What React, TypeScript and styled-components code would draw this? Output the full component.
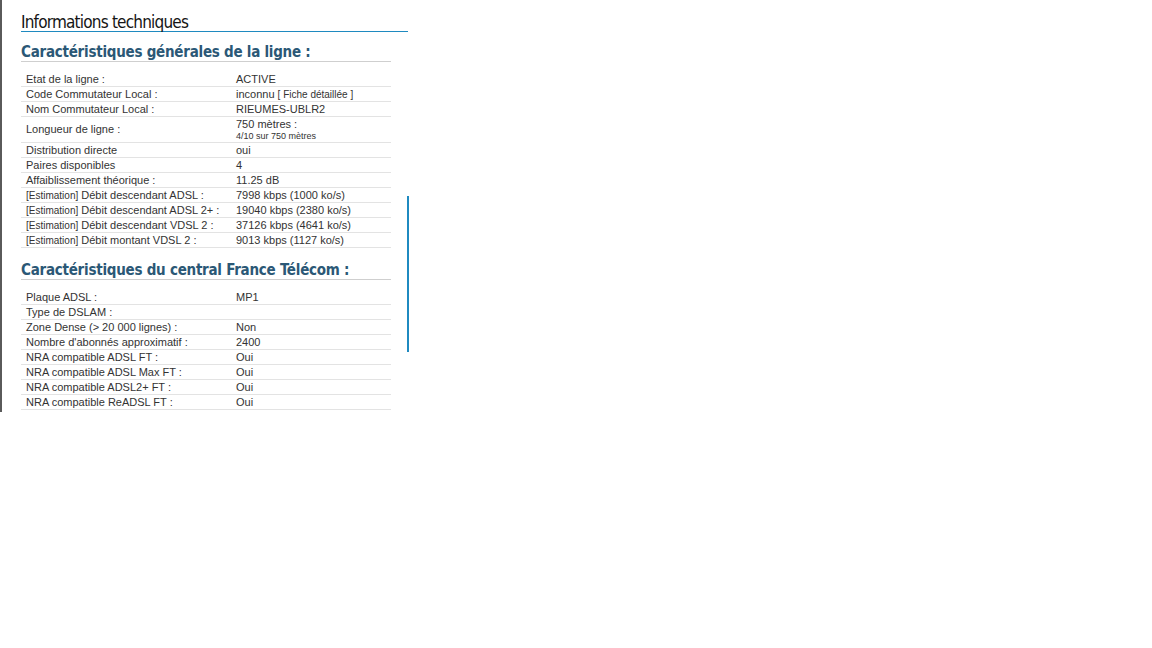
import React from "react";
import styled, { createGlobalStyle } from "styled-components";

const Global = createGlobalStyle`
  html, body { margin: 0; padding: 0; background: #fff; }
  body { font-family: "Liberation Sans", Arial, sans-serif; font-size: 11px; color: #333; }
`;

const Frame = styled.div`
  position: relative;
  width: 387px;
  border-left: 2px solid #5a5a5a;
  padding: 13px 0 2px 19px;
`;

const ScrollMark = styled.div`
  position: absolute;
  left: 405px;
  top: 196px;
  width: 2px;
  height: 156px;
  background: #1f8ac0;
`;

const Title = styled.h1`
  margin: 0;
  font-family: "DejaVu Sans Condensed", "DejaVu Sans", sans-serif;
  font-weight: normal;
  font-size: 17px;
  letter-spacing: -0.8px;
  line-height: 18px;
  color: #151515;
  border-bottom: 1px solid #1f8ac0;
  padding-bottom: 0;
`;

const SectionTitle = styled.h2<{ $first?: boolean }>`
  margin: ${(p) => (p.$first ? "11px" : "13px")} 0 0 0;
  width: 370px;
  font-family: "DejaVu Sans Condensed", "DejaVu Sans", sans-serif;
  font-weight: bold;
  font-size: 15px;
  letter-spacing: -0.25px;
  line-height: 18px;
  color: #2b5876;
  border-bottom: 1px solid #cfcfcf;
  padding-bottom: 0;
`;

const Table = styled.div`
  margin-top: 10px;
  width: 370px;
  display: flex;
  flex-direction: column;
`;

const Row = styled.div<{ $tall?: boolean }>`
  display: grid;
  grid-template-columns: 210px 1fr;
  align-items: center;
  min-height: ${(p) => (p.$tall ? "25px" : "14px")};
  border-bottom: 1px solid #e3e3e3;
`;

const Cell = styled.div`
  padding: 0 5px;
  font-size: 11px;
  line-height: 13px;
  color: #333;
  white-space: nowrap;
`;

const Small = styled.span`
  font-size: 10px;
`;

const Sub = styled.div`
  font-size: 9px;
  line-height: 10px;
`;

type R = { label: React.ReactNode; value: React.ReactNode; tall?: boolean };

const general: R[] = [
  { label: "Etat de la ligne :", value: "ACTIVE" },
  { label: "Code Commutateur Local :", value: <>inconnu <Small>[ Fiche détaillée ]</Small></> },
  { label: "Nom Commutateur Local :", value: "RIEUMES-UBLR2" },
  { label: "Longueur de ligne :", value: <><div>750 mètres :</div><Sub>4/10 sur 750 mètres</Sub></>, tall: true },
  { label: "Distribution directe", value: "oui" },
  { label: "Paires disponibles", value: "4" },
  { label: "Affaiblissement théorique :", value: "11.25 dB" },
  { label: <><Small>[Estimation]</Small> Débit descendant ADSL :</>, value: "7998 kbps (1000 ko/s)" },
  { label: <><Small>[Estimation]</Small> Débit descendant ADSL 2+ :</>, value: "19040 kbps (2380 ko/s)" },
  { label: <><Small>[Estimation]</Small> Débit descendant VDSL 2 :</>, value: "37126 kbps (4641 ko/s)" },
  { label: <><Small>[Estimation]</Small> Débit montant VDSL 2 :</>, value: "9013 kbps (1127 ko/s)" },
];

const central: R[] = [
  { label: "Plaque ADSL :", value: "MP1" },
  { label: "Type de DSLAM :", value: "" },
  { label: "Zone Dense (> 20 000 lignes) :", value: "Non" },
  { label: "Nombre d'abonnés approximatif :", value: "2400" },
  { label: "NRA compatible ADSL FT :", value: "Oui" },
  { label: "NRA compatible ADSL Max FT :", value: "Oui" },
  { label: "NRA compatible ADSL2+ FT :", value: "Oui" },
  { label: "NRA compatible ReADSL FT :", value: "Oui" },
];

const InfoTable = ({ rows }: { rows: R[] }) => (
  <Table>
    {rows.map((r, i) => (
      <Row key={i} $tall={r.tall}>
        <Cell>{r.label}</Cell>
        <Cell>{r.value}</Cell>
      </Row>
    ))}
  </Table>
);

export default function App() {
  return (
    <>
      <Global />
      <Frame>
        <ScrollMark />
        <Title>Informations techniques</Title>
        <SectionTitle $first>Caractéristiques générales de la ligne :</SectionTitle>
        <InfoTable rows={general} />
        <SectionTitle>Caractéristiques du central France Télécom :</SectionTitle>
        <InfoTable rows={central} />
      </Frame>
    </>
  );
}
